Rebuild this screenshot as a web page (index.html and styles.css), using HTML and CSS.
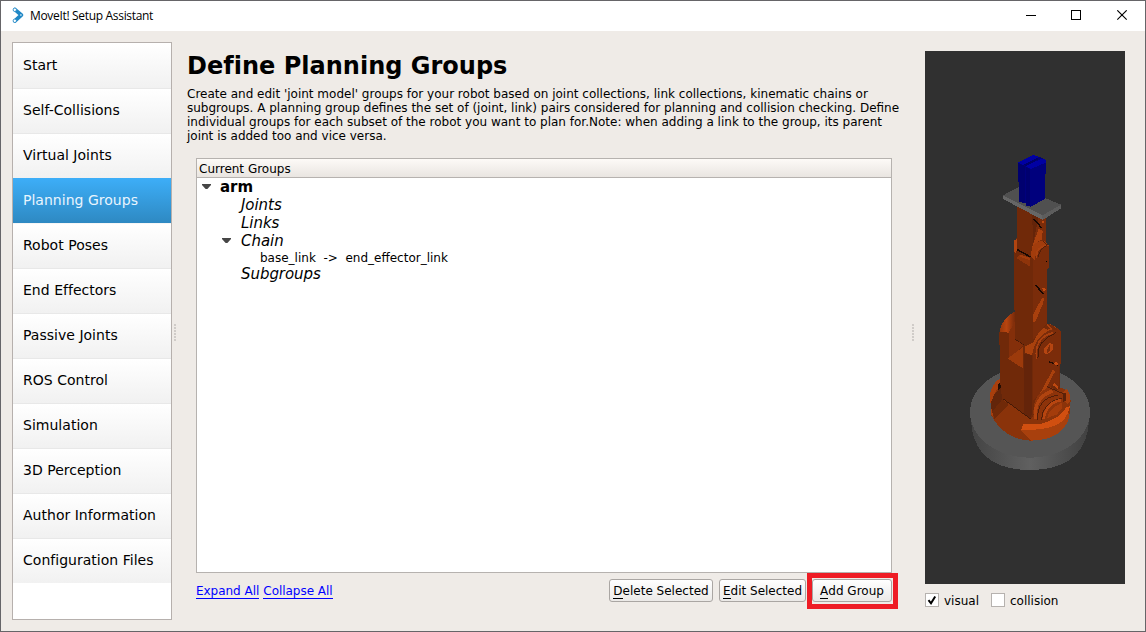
FILE: index.html
```html
<!DOCTYPE html>
<html lang="en">
<head>
<meta charset="utf-8">
<title>MoveIt! Setup Assistant</title>
<link rel="stylesheet" href="styles.css">
</head>
<body>
<div class="window">
  <header class="titlebar">
    <svg class="logo" width="12" height="17" viewBox="0 0 12 17">
      <path d="M3 2.6 9.3 8 3 13.9" fill="none" stroke="#2088c6" stroke-width="3.8" stroke-linecap="round" stroke-linejoin="round"/>
      <circle cx="2.8" cy="2.8" r="1.7" fill="#fff" stroke="#2088c6" stroke-width=".8"/>
      <circle cx="8.9" cy="8" r=".8" fill="#fff"/>
      <circle cx="2.8" cy="13.8" r="1.7" fill="#fff" stroke="#2088c6" stroke-width=".8"/>
    </svg>
    <span class="caption">MoveIt! Setup Assistant</span>
    <svg class="controls" width="102" height="12" viewBox="0 0 102 12" fill="none" stroke="#000">
      <path d="M0 5.5h10M45.500 .5h9v9h-9z" shape-rendering="crispEdges"/>
      <path d="M91.300 .3l9.400 9.400M100.700 .3l-9.400 9.400" stroke-width="1.1"/>
    </svg>
  </header>
  <div class="content">
    <nav class="sidebar">
      <a class="item">Start</a>
      <a class="item">Self-Collisions</a>
      <a class="item">Virtual Joints</a>
      <a class="item selected">Planning Groups</a>
      <a class="item">Robot Poses</a>
      <a class="item">End Effectors</a>
      <a class="item">Passive Joints</a>
      <a class="item">ROS Control</a>
      <a class="item">Simulation</a>
      <a class="item">3D Perception</a>
      <a class="item">Author Information</a>
      <a class="item">Configuration Files</a>
    </nav>
    <div class="splitter"></div>
    <main class="main">
      <h1>Define Planning Groups</h1>
      <p class="intro">Create and edit 'joint model' groups for your robot based on joint collections, link collections, kinematic chains or<br>subgroups. A planning group defines the set of (joint, link) pairs considered for planning and collision checking. Define<br>individual groups for each subset of the robot you want to plan for.Note: when adding a link to the group, its parent<br>joint is added too and vice versa.</p>
      <section class="tree">
        <div class="tree-head">Current Groups</div>
        <div class="row group"><i class="arrow"></i>arm</div>
        <div class="row kind">Joints</div>
        <div class="row kind">Links</div>
        <div class="row kind open"><i class="arrow"></i>Chain</div>
        <div class="row leaf">base_link&nbsp; -&gt;&nbsp; end_effector_link</div>
        <div class="row kind">Subgroups</div>
      </section>
      <div class="actions">
        <a class="link">Expand All</a>
        <a class="link">Collapse All</a>
        <button class="btn delete"><u>D</u>elete Selected</button>
        <button class="btn edit"><u>E</u>dit Selected</button>
        <div class="highlight"><button class="btn add"><u>A</u>dd Group</button></div>
      </div>
    </main>
    <div class="splitter right"></div>
    <aside class="preview">
      <svg class="scene" width="200" height="533" viewBox="925 51 200 533" shape-rendering="crispEdges">
        <defs>
          <linearGradient id="rim" x1="0" x2="1"><stop offset="0" stop-color="#434343"/><stop offset=".5" stop-color="#606060"/><stop offset="1" stop-color="#404040"/></linearGradient>
          <linearGradient id="curve" x1="0" x2="1"><stop offset="0" stop-color="#94360a"/><stop offset=".45" stop-color="#b84510"/><stop offset="1" stop-color="#74290a"/></linearGradient>
        </defs>
        <rect x="925" y="51" width="200" height="533" fill="#303030"/>
        <g transform="translate(960 300) scale(.33333)">
          <!-- base -->
          <path d="M30 330 36 390Q60 510 210 510T384 390L390 330Z" fill="url(#rim)"/>
          <ellipse cx="210" cy="337" rx="180" ry="136" fill="#555"/>
          <!-- turntable -->
          <path d="M90 285Q92 255 120 235L280 255 316 268 332 300 328 348Q310 420 212 422 132 418 94 346Z" fill="#8a330a"/>
          <path d="M90 285Q92 255 120 235L128 250 104 278 100 352 94 345Z" fill="#a83f0d"/>
          <path d="M104 280 122 265 128 298 96 336 92 310Z" fill="#63250a"/>
          <path d="M96 336 128 297 146 313 104 357Z" fill="#702908"/>
          <path d="M113 255 121 247 122 264 115 270Z" fill="#240d03"/>
          <path d="M183 390 250 386Q302 372 324 332L328 350Q310 420 212 422Z" fill="#a8400d"/>
          <path d="M190 373 245 371Q297 357 318 323L330 318Q322 360 288 376 252 391 183 390Z" fill="#d14f10"/>
          <!-- shoulder -->
          <path d="M118 100Q124 55 166 34V120L146 140 124 145Z" fill="url(#curve)"/>
          <path d="M118 95 146 98 166 116 196 134 300 90V265L250 300 212 358 126 295 120 240Z" fill="#702909"/>
          <path d="M146 98 166 62V117L190 137 148 176Z" fill="#842f0a"/>
          <path d="M143 176 190 140V206Z" fill="#9c3a0b"/>
          <path d="M191 160 217 166V337L210 356 191 340Z" fill="#64240a"/>
          <path d="M194 140Q200 85 250 74 280 68 302 94V192L298 200V262L284 250 220 300V166L194 158Z" fill="#7b2c0a"/>
          <path d="M194 138Q205 86 248 73 278 69 290 84 228 98 216 165L194 158Z" fill="#a9410d"/>
          <path d="M240 78 256 73 270 85 262 89ZM262 72 276 75 292 90 280 90Z" fill="#752a09"/>
          <path d="M230 176Q222 113 278 99" fill="none" stroke="#a9400f" stroke-width="5"/>
          <path d="M234 174Q226 124 288 98M166 118l30 18M130 297l82 60" fill="none" stroke="#3b1606" stroke-width="2.500"/>
          <path d="M253 145 268 128 279 133V150L261 164 253 158Z" fill="#b54511"/>
          <path d="M262 149 270 132V151L260 160Z" fill="#7d2d0a"/>
          <path d="M266 185l28 10" stroke="#210c03" stroke-width="4"/>
          <path d="M280 190 288 186 294 189 292 197Z" fill="#c74b10"/>
          <path d="M278 210 286 213 250 282 240 280Z" fill="#aa410d"/>
          <path d="M278 255 284 250 296 260 293 266Z" fill="#bd4911"/>
          <!-- lower hub -->
          <path d="M220 340Q220 278 270 261L312 285V320L292 351 225 361Z" fill="#8d330a"/>
          <path d="M226 358Q220 292 278 273" fill="none" stroke="#b04410" stroke-width="10"/>
          <path d="M233 360Q229 296 294 285M244 359Q248 305 307 294M261 260l55 24" fill="none" stroke="#461b08" stroke-width="2.500"/>
          <path d="M251 358Q255 310 304 300" fill="none" stroke="#b74510" stroke-width="8"/>
          <path d="M262 354Q267 325 306 308V325L290 344Z" fill="#a43c0b"/>
          <path d="M310 275 320 267 330 284V304L324 312 310 300Z" fill="#a9400d"/>
          <path d="M309 278 317 280 318 301 310 305Z" fill="#5c2108"/>
        </g>
        <g transform="translate(960 140) scale(.33333)">
          <!-- upper arm -->
          <path d="M162 340 164 302 172 292V200H258V307L267 318V382L262 388 261 555 238 572 220 608 198 618 164 596V510L162 505Z" fill="#702909"/>
          <path d="M162 320 163 302 172 294V322L168 340 162 335Z" fill="#b04410"/>
          <path d="M220 220 258 235V307L267 318V382L262 388 261 550 219 600Z" fill="#7a2c0a"/>
          <path d="M216 220 236 229 220 310Z" fill="#642409"/>
          <path d="M236 267 248 272 246 299 232 306 218 336 216 321Z" fill="#aa410e"/>
          <path d="M212 350 216 325Q226 299 254 304L266 317Q228 321 224 360Z" fill="#a23c0c"/>
          <path d="M230 353Q226 325 258 316" fill="none" stroke="#a9400f" stroke-width="5"/>
          <path d="M235 350Q238 327 260 317M250 304l14 12" fill="none" stroke="#4a1c08" stroke-width="2.500"/>
          <path d="M172 329 212 351M222 237l22 26M226 434l25 29" stroke="#170802" stroke-width="4.500"/>
          <path d="M246 242 252 243V251L244 247ZM246 445 255 443 258 449 252 454Z" fill="#c04a10"/>
          <path d="M169 354 181 344 210 353V380Z" fill="#8e340a"/>
          <path d="M182 344 210 354V361L178 349Z" fill="#a23c0c"/>
          <path d="M246 474 252 475 250 488 225 548 219 544 220 522Z" fill="#a9400d"/>
          <circle cx="259" cy="365" r="2"/>
          <!-- tool plate -->
          <path d="M129 166 176 141 303 194V205L248 240 129 177Z" fill="#666"/>
          <path d="M129 166 176 141 303 194 247 226Z" fill="#505050"/>
          <path d="M247 226 303 194V205L248 240Z" fill="#5d5d5d"/>
          <!-- gripper -->
          <path d="M174 67 218 45 234 49 258 60V102H255V177L212 200 198 197 196 187 190 189 177 184V126L174 124Z" fill="#00007d"/>
          <path d="M174 67 218 45 234 49V56L194 76 185 73ZM194 78 247 56 258 60 257 68 212 87Z" fill="#0000a3"/>
          <path d="M174 69 194 78 196 184 190 189 177 184V126L174 124ZM197 80 211 87V200L198 195Z" fill="#00006f"/>
          <path d="M192 74 234 52V59L198 79Z" fill="#000068"/>
        </g>
      </svg>
      <div class="checks">
        <span class="box"><svg width="12" height="12" viewBox="0 0 12 12"><path d="M2.500 6.200 5 9.300 9.200 2.500" fill="none" stroke="#000" stroke-width="2"/></svg></span><span class="label visual">visual</span>
        <span class="box"></span><span class="label">collision</span>
      </div>
    </aside>
  </div>
</div>
</body>
</html>
```

FILE: styles.css
```css
* { box-sizing: border-box; }
body { margin: 0; font: 12px/14px "DejaVu Sans", sans-serif; color: #000; }
.window { width: 1146px; height: 632px; border: 1px solid #666568; background: #efebe7; overflow: hidden; }
.titlebar { height: 30px; background: #fff; display: flex; align-items: flex-start; padding: 6px 17px 0 11px; }
.logo { flex: none; }
.caption { margin-left: 6px; font: 12px/17px "Open Sans", "Noto Sans", sans-serif; letter-spacing: -0.32px; white-space: nowrap; }
.controls { margin: 3px 0 0 auto; }
.content { display: flex; height: 600px; padding-left: 11px; }
.sidebar { width: 160px; height: 578px; margin-top: 11px; border: 1px solid #b6b0ad; background: #fff; flex: none; }
.item { display: block; height: 45px; padding-left: 10px; font-size: 14px; line-height: 42px; letter-spacing: .02px; background: linear-gradient(#fff, #f1f1f1); border-top: 1px solid #e8e8e8; white-space: nowrap; }
.item:first-child { border-top-color: #fff; }
.item.selected { color: #e9f5fe; background: linear-gradient(#3daef8, #2e89c2); border-top: 0; line-height: 44px; }
.item.selected + .item { border-top-color: #f6f6f6; }
.splitter { width: 3px; height: 18px; margin: 293px 10px 0 2px; flex: none; background: radial-gradient(circle at 1px 1px, #c4c0bd .6px, transparent 1px) 0 0 / 3px 3px; }
.splitter.right { margin: 293px 10px 0 0; }
.main { width: 725px; padding: 20px 0 0; flex: none; }
h1 { margin: 0; font-size: 24px; line-height: 30px; font-weight: bold; letter-spacing: .01px; white-space: nowrap; }
.intro { margin: 6px 0 15px; white-space: nowrap; }
.tree { width: 696px; height: 415px; margin-left: 9px; border: 1px solid #b6b2af; background: #fff; }
.tree-head { height: 19px; padding-left: 2px; line-height: 20px; background: linear-gradient(#fdfaf7, #e9e5e1); border-bottom: 1px solid #b6b2af; }
.row { display: flex; align-items: center; height: 18px; white-space: pre; }
.group { padding-left: 5px; font-size: 15px; font-weight: bold; }
.kind { padding-left: 44px; font-size: 15px; font-style: italic; letter-spacing: -.05px; }
.kind.open { padding-left: 25px; }
.leaf { height: 15px; padding-left: 63px; }
.arrow { width: 9px; height: 5px; margin: 0 9px 1px 0; background: #464646; clip-path: polygon(0 0, 100% 0, 100% 20%, 60% 100%, 40% 100%, 0 20%); }
.kind .arrow { margin-right: 10px; }
.actions { display: flex; align-items: flex-start; height: 36px; padding-left: 9px; }
.link { margin: 11px 4px 0 0; color: #00f; line-height: 14px; letter-spacing: -.03px; border-bottom: 1px solid #00f; white-space: nowrap; }
.btn { height: 23px; margin-top: 6px; padding: 1px 0 0; border: 1px solid #aaa6a3; border-radius: 3px; background: linear-gradient(#fff, #ebe9e7); font: 12px/20px "DejaVu Sans", sans-serif; color: #000; white-space: nowrap; }
.btn u { text-decoration: none; display: inline-block; line-height: 13px; border-bottom: 1px solid #000; }
.delete { width: 104px; margin-left: auto; }
.edit { width: 87px; margin-left: 6px; }
.highlight { width: 91px; height: 36px; margin: 0 14px 0 1px; border: 5px solid #ee1c25; flex: none; }
.add { display: block; width: 80px; margin-top: 1px; }
.preview { width: 200px; padding-top: 20px; flex: none; }
.scene { display: block; }
.checks { display: flex; align-items: center; height: 14px; margin-top: 9px; }
.box { width: 14px; height: 14px; margin-right: 5px; border: 1px solid #b6b2af; background: #fff; flex: none; }
.box svg { display: block; }
.label { padding-top: 2px; }
.visual { margin-right: 12px; }
```
